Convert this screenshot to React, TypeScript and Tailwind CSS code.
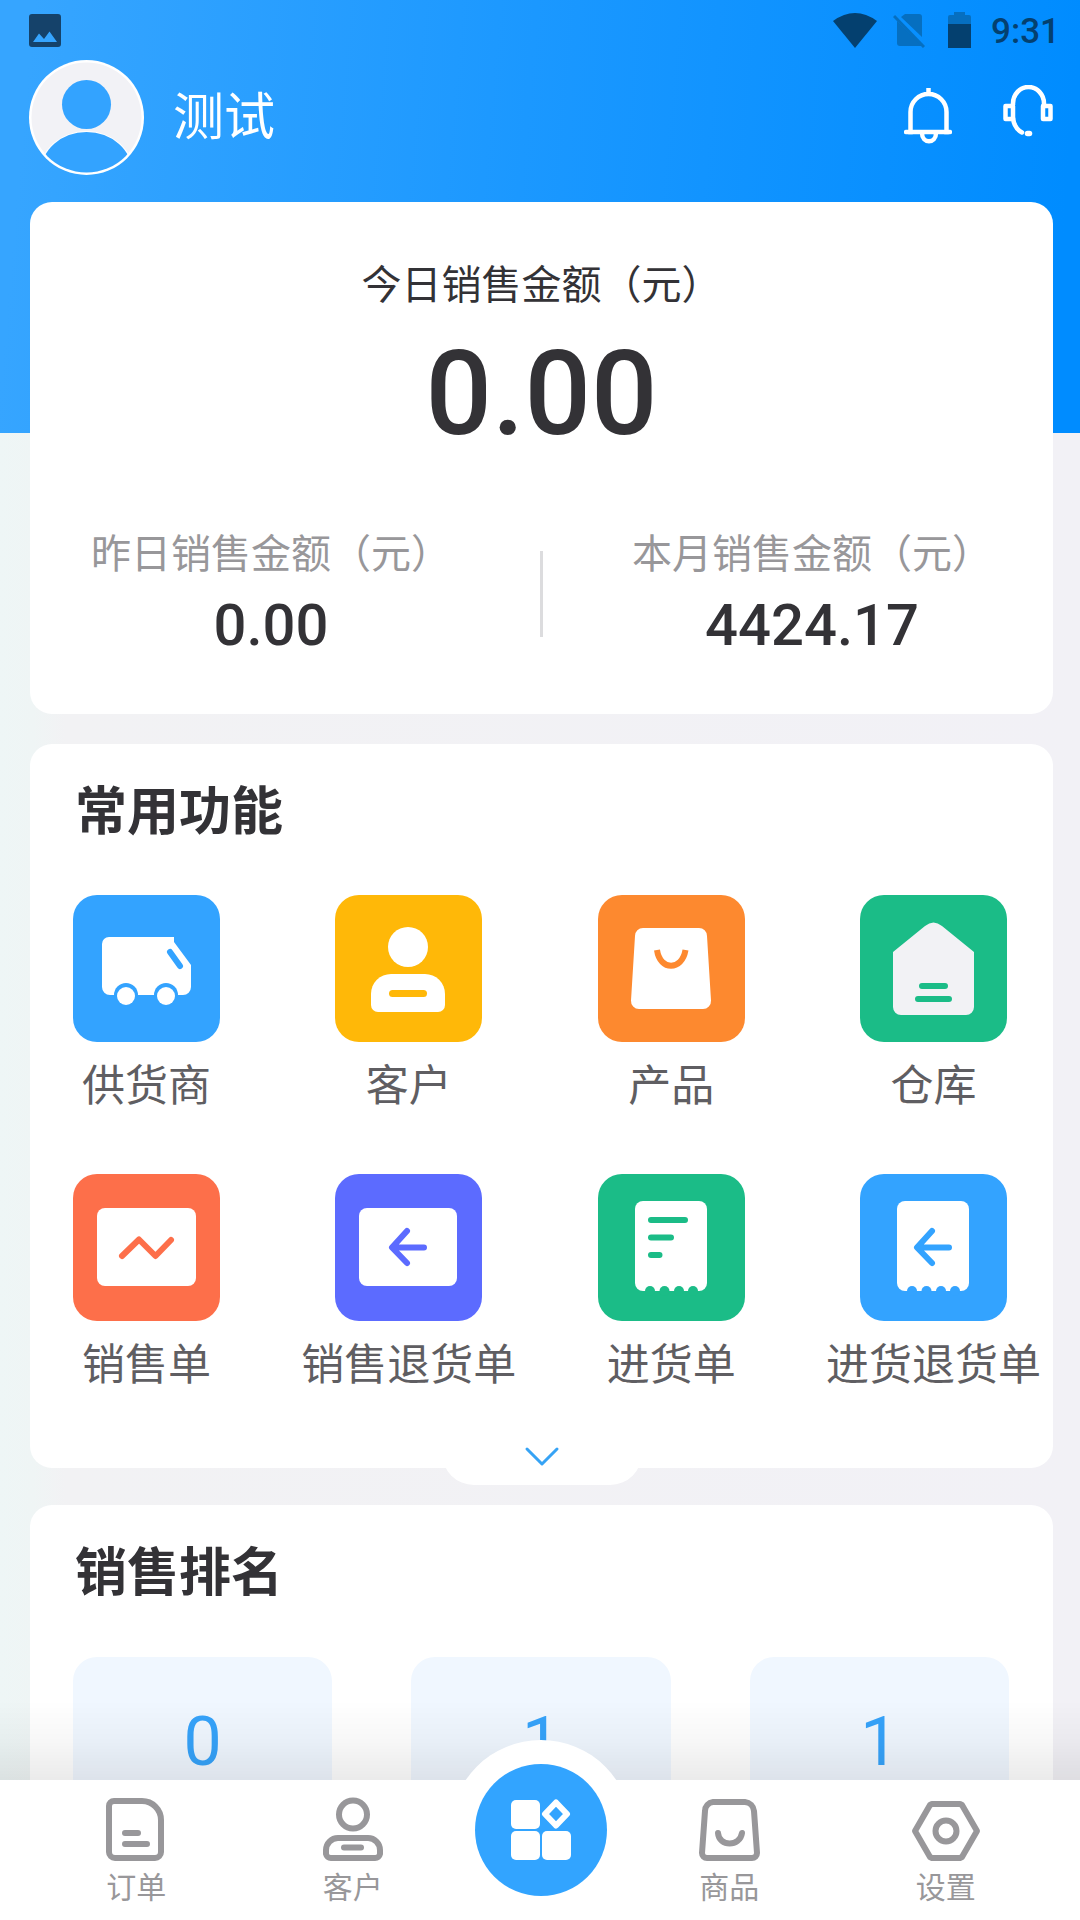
import type { ReactNode } from "react";

function Tile({ color, children }: { color: string; children: ReactNode }) {
  return (
    <svg viewBox="0 0 147 147" className="block size-[147px]" aria-hidden="true">
      <rect width="147" height="147" rx="24" fill={color} />
      {children}
    </svg>
  );
}

function BackArrow({ color }: { color: string }) {
  return (
    <path
      d="M72 57 57 73.5 72 89M58 73.5h31"
      fill="none"
      stroke={color}
      strokeWidth="6"
      strokeLinecap="round"
      strokeLinejoin="round"
    />
  );
}

function Receipt({ color }: { color: string }) {
  return (
    <>
      <path d="M45 27h56a8 8 0 0 1 8 8v74a8 8 0 0 1-8 8H45a8 8 0 0 1-8-8V35a8 8 0 0 1 8-8z" fill="#fff" />
      {[52, 66.5, 81, 95].map((x) => (
        <circle key={x} cx={x} cy="117" r="5" fill={color} />
      ))}
    </>
  );
}

const functions: { label: string; icon: ReactNode }[] = [
  {
    label: "供货商",
    icon: (
      <Tile color="#33a3ff">
        <path d="M36 42h65v5l17 23v22a8 8 0 0 1-8 8H37a8 8 0 0 1-8-8V49a7 7 0 0 1 7-7z" fill="#fff" />
        <path d="m97 57 10 14" stroke="#33a3ff" strokeWidth="6" strokeLinecap="round" />
        <circle cx="53" cy="100" r="12" fill="#33a3ff" />
        <circle cx="93" cy="100" r="12" fill="#33a3ff" />
        <circle cx="53" cy="101" r="9" fill="#fff" />
        <circle cx="93" cy="101" r="9" fill="#fff" />
      </Tile>
    ),
  },
  {
    label: "客户",
    icon: (
      <Tile color="#ffb808">
        <circle cx="73" cy="52" r="20" fill="#fff" />
        <path d="M56 79h34a20 20 0 0 1 20 20v11a7 7 0 0 1-7 7H43a7 7 0 0 1-7-7V99a20 20 0 0 1 20-20z" fill="#fff" />
        <rect x="54" y="95" width="38" height="7" rx="3.5" fill="#ffb808" />
      </Tile>
    ),
  },
  {
    label: "产品",
    icon: (
      <Tile color="#fd892f">
        <path d="M45 33h56a8 8 0 0 1 8 8l4 64.500a8 8 0 0 1-8 8.500H41a8 8 0 0 1-8-8.500L37 41a8 8 0 0 1 8-8z" fill="#fff" />
        <path d="M59 55c3 21 25 21 28.500 0" fill="none" stroke="#fd892f" strokeWidth="6" />
      </Tile>
    ),
  },
  {
    label: "仓库",
    icon: (
      <Tile color="#1bbc87">
        <path d="M65 31q8.500-7 17 0l32 26v55a8 8 0 0 1-8 8H41a8 8 0 0 1-8-8V57z" fill="#f2f2f5" />
        <path d="M62 91h23M58 104h31" stroke="#1bbc87" strokeWidth="6" strokeLinecap="round" />
      </Tile>
    ),
  },
  {
    label: "销售单",
    icon: (
      <Tile color="#fd6f4a">
        <rect x="24" y="34" width="99" height="78" rx="8" fill="#fff" />
        <path
          d="m49 82 17-16.500L82.500 82 98 66"
          fill="none"
          stroke="#fd6f4a"
          strokeWidth="6"
          strokeLinecap="round"
          strokeLinejoin="round"
        />
      </Tile>
    ),
  },
  {
    label: "销售退货单",
    icon: (
      <Tile color="#5c6bff">
        <rect x="24" y="34" width="98" height="78" rx="8" fill="#fff" />
        <BackArrow color="#5c6bff" />
      </Tile>
    ),
  },
  {
    label: "进货单",
    icon: (
      <Tile color="#1bbc87">
        <Receipt color="#1bbc87" />
        <path d="M53 46h34M53 63.500h20M53 81h8.500" stroke="#1bbc87" strokeWidth="6" strokeLinecap="round" />
      </Tile>
    ),
  },
  {
    label: "进货退货单",
    icon: (
      <Tile color="#33a3ff">
        <Receipt color="#33a3ff" />
        <BackArrow color="#33a3ff" />
      </Tile>
    ),
  },
];

function NavItem({ label, children }: { label: string; children: ReactNode }) {
  return (
    <a href="#" className="flex flex-1 flex-col items-center pt-4 text-[30px] leading-10 text-[#98979a]">
      <svg
        viewBox="0 0 70 70"
        className="mb-0.5 block size-[70px]"
        fill="none"
        stroke="#98979a"
        strokeWidth="6"
        strokeLinecap="round"
        strokeLinejoin="round"
        aria-hidden="true"
      >
        {children}
      </svg>
      {label}
    </a>
  );
}

function StatusBar() {
  return (
    <div className="flex h-15 items-center justify-between pr-5 pl-[29px]">
      <svg viewBox="0 0 32 33" className="h-[33px] w-8" aria-hidden="true">
        <path
          d="M3 0h26a3 3 0 0 1 3 3v27a3 3 0 0 1-3 3H3a3 3 0 0 1-3-3V3a3 3 0 0 1 3-3zM4 28h24L20.500 17.500 15 25l-5-5.500z"
          fill="#15426a"
          fillRule="evenodd"
        />
      </svg>
      <div className="flex items-center text-[35px] font-medium text-[#04406f]">
        <svg viewBox="0 0 44 35" className="mr-4 h-[35px] w-11" aria-hidden="true">
          <path d="M0 8Q22-8 44 8L22 35z" fill="#04406f" />
        </svg>
        <svg viewBox="0 0 32 36" className="mr-[23px] h-9 w-8" aria-hidden="true">
          <path d="M12 2h14a3 3 0 0 1 3 3v20L8 5zM4 9l25 25H7a3 3 0 0 1-3-3z" fill="#066fc0" />
          <path d="m1 4 30 31" stroke="#066fc0" strokeWidth="3" />
        </svg>
        <svg viewBox="0 0 23 36" className="mr-5 h-9 w-[23px]" aria-hidden="true">
          <path d="M6 0h11v3h4a2 2 0 0 1 2 2v8H0V5a2 2 0 0 1 2-2h4z" fill="#066fc0" />
          <path d="M0 12h23v24H0z" fill="#04406f" />
        </svg>
        <span className="pt-1 leading-9">9:31</span>
      </div>
    </div>
  );
}

function Header() {
  return (
    <header className="flex h-[115px] items-center pr-[27px] pl-[29px]">
      <svg viewBox="0 0 115 115" className="size-[115px]" aria-hidden="true">
        <defs>
          <clipPath id="avatar">
            <circle cx="57.500" cy="57.500" r="55" />
          </clipPath>
        </defs>
        <circle cx="57.500" cy="57.500" r="57.500" fill="#fff" />
        <g clipPath="url(#avatar)">
          <path d="M0 0h115v115H0z" fill="#f2f2f6" />
          <ellipse cx="57.500" cy="113" rx="47" ry="42" fill="#fff" />
          <ellipse cx="57.500" cy="113" rx="46" ry="41" fill="#33a3ff" />
          <circle cx="57.500" cy="44.500" r="24.500" fill="#33a3ff" />
        </g>
      </svg>
      <h1 className="ml-[29px] flex-1 text-[51px] leading-[72px] text-white">测试</h1>
      <button type="button" aria-label="通知" className="mr-[51px] mb-1">
        <svg viewBox="0 0 48 56" className="h-14 w-12" fill="none" stroke="#fff" strokeWidth="4.500" aria-hidden="true">
          <path d="M24.500 2v4M6.500 44V24a18 18 0 0 1 36 0v20" strokeLinecap="square" />
          <path d="M2 44h44" strokeLinecap="round" />
          <path d="M18 45c0 11 14 11 14 0" />
        </svg>
      </button>
      <button type="button" aria-label="客服" className="mb-3.5">
        <svg viewBox="0 0 50 52" className="h-[52px] w-[50px]" fill="none" stroke="#fff" strokeWidth="4.500" aria-hidden="true">
          <path d="M10 20v-1.500a15.500 16.500 0 0 1 31 0V20" />
          <path d="M2.500 21h7.500v13H2.500zM40 21h7.500v13H40z" strokeLinejoin="round" />
          <path d="M10 33q1 10 9 14.500" strokeLinecap="round" />
          <path d="M24.500 48.500h2" strokeLinecap="round" strokeWidth="5.500" />
        </svg>
      </button>
    </header>
  );
}

function Amount({ label, value }: { label: string; value: string }) {
  return (
    <div className="text-center">
      <h2 className="text-[40px] leading-15 text-[#98979a]">{label}</h2>
      <p className="mt-2.5 text-[58px] leading-15 font-medium text-[#333236]">{value}</p>
    </div>
  );
}

export default function App() {
  return (
    <div className="flex h-screen flex-col font-[Roboto,'Noto_Sans_CJK_SC',sans-serif]">
      <div className="min-h-0 flex-1 overflow-y-auto [scrollbar-width:none]">
        <div className="bg-[linear-gradient(95deg,#36a5ff_3%,#1b98ff_48%,#008cff_97%),linear-gradient(90deg,#eef6f6_0%,#eff5f5_3%,#f2f2f4_6%,#f2f1f6_100%)] bg-[length:100%_433px,100%_100%] bg-no-repeat pb-10">
          <StatusBar />
          <Header />
          <main className="mt-[27px] mr-[27px] ml-[30px]">
            <section className="rounded-[22px] bg-white px-[61px] pt-[54px] pb-[59px]">
              <h2 className="text-center text-[40px] leading-15 text-[#333236]">今日销售金额（元）</h2>
              <p className="mt-[18px] text-center text-[117px] leading-[120px] font-medium text-[#333236]">0.00</p>
              <div className="mt-[71px] flex justify-between">
                <Amount label="昨日销售金额（元）" value="0.00" />
                <div className="mt-[26px] h-[86px] w-[3px] bg-[#dcdcde]" />
                <Amount label="本月销售金额（元）" value="4424.17" />
              </div>
            </section>

            <section className="relative mt-[30px] rounded-[22px] bg-white pt-[33px] pr-[46px] pb-[73px] pl-[43px]">
              <h2 className="pl-0.5 text-[52px] leading-[72px] font-bold text-[#333236]">常用功能</h2>
              <ul className="mt-[46px] grid grid-cols-[repeat(4,147px)] justify-between gap-y-[58px]">
                {functions.map(({ label, icon }) => (
                  <li key={label}>
                    <button type="button" className="flex w-full flex-col items-center">
                      {icon}
                      <span className="mt-3.5 text-[43px] leading-15 whitespace-nowrap text-[#5f5e62]">{label}</span>
                    </button>
                  </li>
                ))}
              </ul>
              <button
                type="button"
                aria-label="展开"
                className="absolute -bottom-[17px] left-1/2 flex h-12 w-[200px] -translate-x-1/2 items-start justify-center rounded-b-[32px] bg-white pt-2"
              >
                <svg viewBox="0 0 36 24" className="h-6 w-9" fill="none" stroke="#36a3f5" strokeWidth="3" aria-hidden="true">
                  <path d="m3 4 15 15L33 4" strokeLinecap="round" strokeLinejoin="round" />
                </svg>
              </button>
            </section>

            <section className="mt-[37px] rounded-[22px] bg-white pt-[33px] pr-[44px] pb-12 pl-[43px]">
              <h2 className="pl-0.5 text-[52px] leading-[72px] font-bold text-[#333236]">销售排名</h2>
              <ul className="mt-[47px] grid grid-cols-3 gap-[79px] text-center text-[68px] leading-16 text-[#36a3fa]">
                {["0", "1", "1"].map((value, i) => (
                  <li key={i} className="h-[210px] rounded-[24px] bg-[#f0f7ff] pt-[53px]">
                    {value}
                  </li>
                ))}
              </ul>
            </section>
          </main>
        </div>
      </div>

      <nav className="relative flex h-[140px] shrink-0 bg-white pr-[26px] pl-7">
        <div className="pointer-events-none absolute inset-x-0 bottom-full h-20 bg-linear-to-t from-black/8 via-black/3 to-transparent" />
        <NavItem label="订单">
          <path d="M13 5h28a19 19 0 0 1 19 19v32a6 6 0 0 1-6 6H14a6 6 0 0 1-6-6V10a5 5 0 0 1 5-5z" />
          <path d="M24 37h13M24 48h22" />
        </NavItem>
        <NavItem label="客户">
          <circle cx="35" cy="18.500" r="14" />
          <path d="M20 42h30a12 12 0 0 1 12 12v4a5 5 0 0 1-5 4H13a5 5 0 0 1-5-4v-4a12 12 0 0 1 12-12z" />
          <path d="M26 51.500h17" />
        </NavItem>
        <div className="relative w-40">
          <div className="absolute -top-10 left-1/2 size-[182px] -translate-x-1/2 rounded-full bg-white" />
          <button
            type="button"
            aria-label="工作台"
            className="absolute -top-4 left-1/2 size-[132px] -translate-x-1/2 rounded-full bg-[#32a4ff]"
          >
            <svg viewBox="0 0 132 132" className="block size-full" fill="#fff" aria-hidden="true">
              <rect x="36" y="36" width="29" height="29" rx="5" />
              <rect x="36" y="67" width="29" height="29" rx="5" />
              <rect x="67" y="67" width="29" height="29" rx="5" />
              <path
                d="M81 38.500 92 50 81 61.500 70 50z"
                fill="none"
                stroke="#fff"
                strokeWidth="6"
                strokeLinejoin="round"
              />
            </svg>
          </button>
        </div>
        <NavItem label="商品">
          <path d="M19 6h32a10 10 0 0 1 9 9l3 42a5 5 0 0 1-5 5H13a5 5 0 0 1-5-5l3-42a9 9 0 0 1 8-9z" />
          <path d="M24 37c1 14 22 14 24 0" />
        </NavItem>
        <NavItem label="设置">
          <path d="M21 8h28l2 1 15 26-15 26-2 1H21l-2-1L4 35 19 9z" />
          <circle cx="35" cy="35" r="10.500" />
        </NavItem>
      </nav>
    </div>
  );
}
